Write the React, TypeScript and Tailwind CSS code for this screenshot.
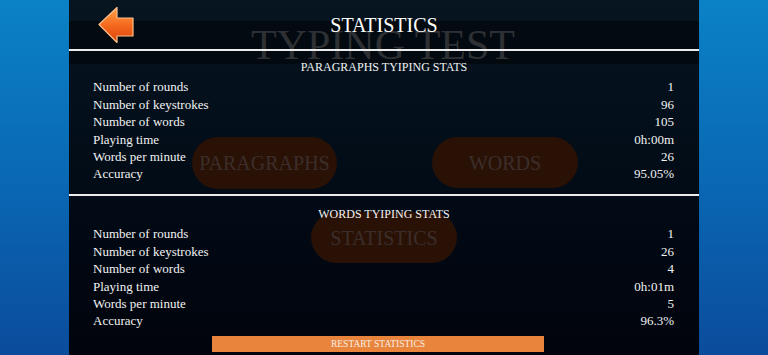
import React from "react";

const paragraphStats: [string, string][] = [
    ["Number of rounds", "1"],
    ["Number of keystrokes", "96"],
    ["Number of words", "105"],
    ["Playing time", "0h:00m"],
    ["Words per minute", "26"],
    ["Accuracy", "95.05%"],
];

const wordStats: [string, string][] = [
    ["Number of rounds", "1"],
    ["Number of keystrokes", "26"],
    ["Number of words", "4"],
    ["Playing time", "0h:01m"],
    ["Words per minute", "5"],
    ["Accuracy", "96.3%"],
];

const BackArrow = () => (
    <svg width="36" height="38" viewBox="0 0 36 38">
        <defs>
            <linearGradient id="arrowFill" x1="0" y1="0" x2="0" y2="1">
                <stop offset="0" stopColor="#ffa24a" />
                <stop offset="0.5" stopColor="#f56a1e" />
                <stop offset="1" stopColor="#d8420c" />
            </linearGradient>
        </defs>
        <path
            d="M1 18.5 L19 1.5 L19 12 L35 12 L35 30 L19 30 L19 36.5 Z"
            fill="url(#arrowFill)"
            stroke="#ffc08a"
            strokeWidth="1.2"
            strokeLinejoin="round"
        />
    </svg>
);

const StatRows = ({ rows }: { rows: [string, string][] }) => (
    <div className="mt-[3.3px] flex flex-col pl-[24px] pr-[25px]">
        {rows.map(([label, value], index) => (
            <div key={index} className="flex justify-between text-[13px] leading-[17.4px] text-[#f2f2f2]">
                <span>{label}</span>
                <span>{value}</span>
            </div>
        ))}
    </div>
);

const Backdrop = () => (
    <div className="pointer-events-none absolute inset-0">
        <div className="absolute left-0 right-0 top-[21px] h-[43px] bg-black/45" />
        <div className="absolute left-[164px] top-[20px] w-[300px] whitespace-nowrap text-center text-[42px] leading-[50px] text-[#2e3033]">
            TYPING TEST
        </div>
        <div className="absolute left-[123px] top-[137px] flex h-[52px] w-[145px] items-center justify-center rounded-full bg-[#2a1106] text-[20px] text-[#3b2e2a]">
            PARAGRAPHS
        </div>
        <div className="absolute left-[363px] top-[137px] flex h-[51px] w-[146px] items-center justify-center rounded-full bg-[#2a1106] text-[20px] text-[#3b2e2a]">
            WORDS
        </div>
        <div className="absolute left-[242px] top-[212px] flex h-[51px] w-[146px] items-center justify-center rounded-full bg-[#2a1106] text-[20px] text-[#3b2e2a]">
            STATISTICS
        </div>
    </div>
);

export default function App() {
    return (
        <div className="flex h-[355px] w-[768px] overflow-hidden bg-gradient-to-b from-[#0b82c6] via-[#0a68b4] to-[#0b4c9c] [font-family:'Liberation_Serif','Times_New_Roman',serif]">
            <div className="w-[69px] shrink-0" />
            <div className="relative w-[630px] shrink-0 bg-gradient-to-b from-[#071521] via-[#020c17] to-[#01040c]">
                <Backdrop />
                <div className="relative flex flex-col">
                    <div className="grid h-[49px] grid-cols-[1fr_auto_1fr] items-center">
                        <div className="pl-[29px] pt-[1px]">
                            <BackArrow />
                        </div>
                        <h1 className="text-[20px] leading-[24px] text-white">STATISTICS</h1>
                        <div />
                    </div>
                    <div className="h-[2px] bg-[#ececec]" />

                    <p className="pt-[8px] text-center text-[12px] leading-[16px] text-[#f2f2f2]">
                        PARAGRAPHS TYIPING STATS
                    </p>
                    <StatRows rows={paragraphStats} />

                    <div className="mt-[11.3px] h-[2px] bg-[#ececec]" />

                    <p className="pt-[10px] text-center text-[12px] leading-[16px] text-[#f2f2f2]">
                        WORDS TYIPING STATS
                    </p>
                    <StatRows rows={wordStats} />

                    <button
                        type="button"
                        className="ml-[143px] mt-[6.3px] h-[16px] w-[332px] bg-[#e8843c] text-[9.5px] leading-[16px] text-[#fbeee2] [font-family:'Liberation_Serif','Times_New_Roman',serif]"
                    >
                        RESTART STATISTICS
                    </button>
                </div>
            </div>
            <div className="w-[69px] shrink-0" />
        </div>
    );
}
